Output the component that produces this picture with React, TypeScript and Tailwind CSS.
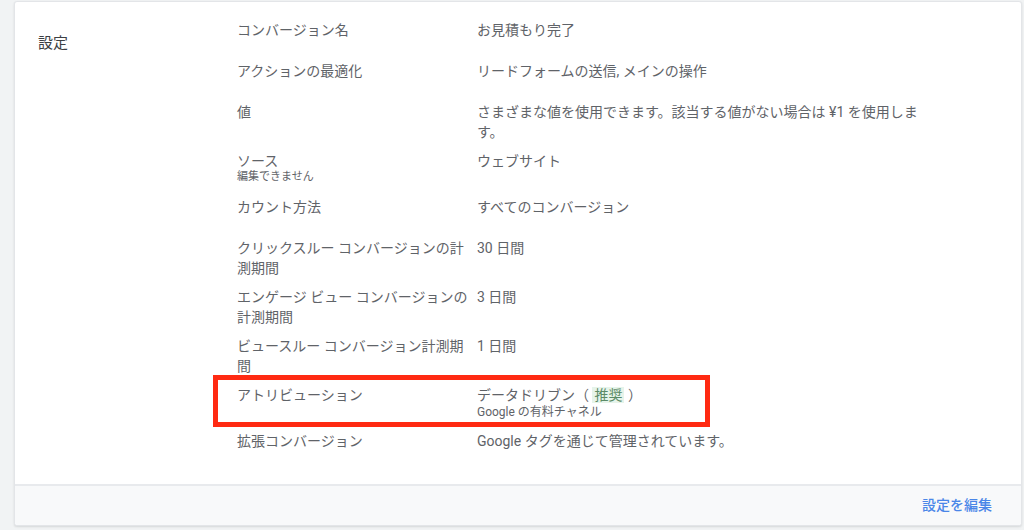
import React from 'react'

const rows: { label: string; sub?: string; value: React.ReactNode; valueSub?: string; highlight?: boolean }[] = [
  { label: 'コンバージョン名', value: 'お見積もり完了' },
  { label: 'アクションの最適化', value: 'リードフォームの送信, メインの操作' },
  { label: '値', value: 'さまざまな値を使用できます。該当する値がない場合は ¥1 を使用します。' },
  { label: 'ソース', sub: '編集できません', value: 'ウェブサイト' },
  { label: 'カウント方法', value: 'すべてのコンバージョン' },
  { label: 'クリックスルー コンバージョンの計測期間', value: '30 日間' },
  { label: 'エンゲージ ビュー コンバージョンの計測期間', value: '3 日間' },
  { label: 'ビュースルー コンバージョン計測期間', value: '1 日間' },
  {
    label: 'アトリビューション',
    value: (
      <>
        データドリブン（ <span className="bg-[#e6f4ea] text-[#5b8a66] px-[2px]">推奨</span> ）
      </>
    ),
    valueSub: 'Google の有料チャネル',
    highlight: true,
  },
  { label: '拡張コンバージョン', value: 'Google タグを通じて管理されています。' },
]

const App = () => {
  return (
    <div
      className="w-[1024px] h-[530px] bg-[#f1f3f4] pl-[14px] pt-[1px] pr-[2px] overflow-hidden"
      style={{ fontFamily: 'Roboto, "Noto Sans CJK JP", sans-serif' }}
    >
      <div className="h-[525px] bg-white border border-[#e3e5e8] rounded-[3px] shadow-[0_1px_2px_rgba(60,64,67,0.15)] flex flex-col">
        {/* Settings body */}
        <div className="flex-1 flex pt-[13px] pl-[23px]">
          <div className="w-[199px] pt-[18px] text-[15px] leading-[20px] text-[#3c4043]">設定</div>
          <div className="flex flex-col">
            {rows.map((r) => (
              <div
                key={r.label}
                className={`relative flex min-h-[41px] pt-[5px] text-[14px] leading-[20px] text-[#5f6368] ${r.label === 'ソース' ? 'min-h-[46px]' : ''} ${r.highlight ? 'pb-[7px]' : 'pb-[4px]'}`}
              >
                <div className="w-[240px] pr-[8px]">
                  <div>{r.label}</div>
                  {r.sub && <div className="text-[11px] leading-[14px] -mt-[1px]">{r.sub}</div>}
                </div>
                <div className="w-[452px]">
                  <div>{r.value}</div>
                  {r.valueSub && <div className="text-[12px] leading-[14px]">{r.valueSub}</div>}
                </div>
                {r.highlight && (
                  <div className="absolute left-[-24px] top-[-5px] w-[497px] h-[52px] border-[5px] border-[#ff2a12] pointer-events-none" />
                )}
              </div>
            ))}
          </div>
        </div>
        {/* Footer */}
        <div className="h-[41px] border-t-2 border-[#e8eaed] bg-[#f8f9fa] flex items-center justify-end pr-[29px] rounded-b-[3px]">
          <span className="text-[14px] text-[#4a86e8] font-medium">設定を編集</span>
        </div>
      </div>
    </div>
  )
}

export default App
